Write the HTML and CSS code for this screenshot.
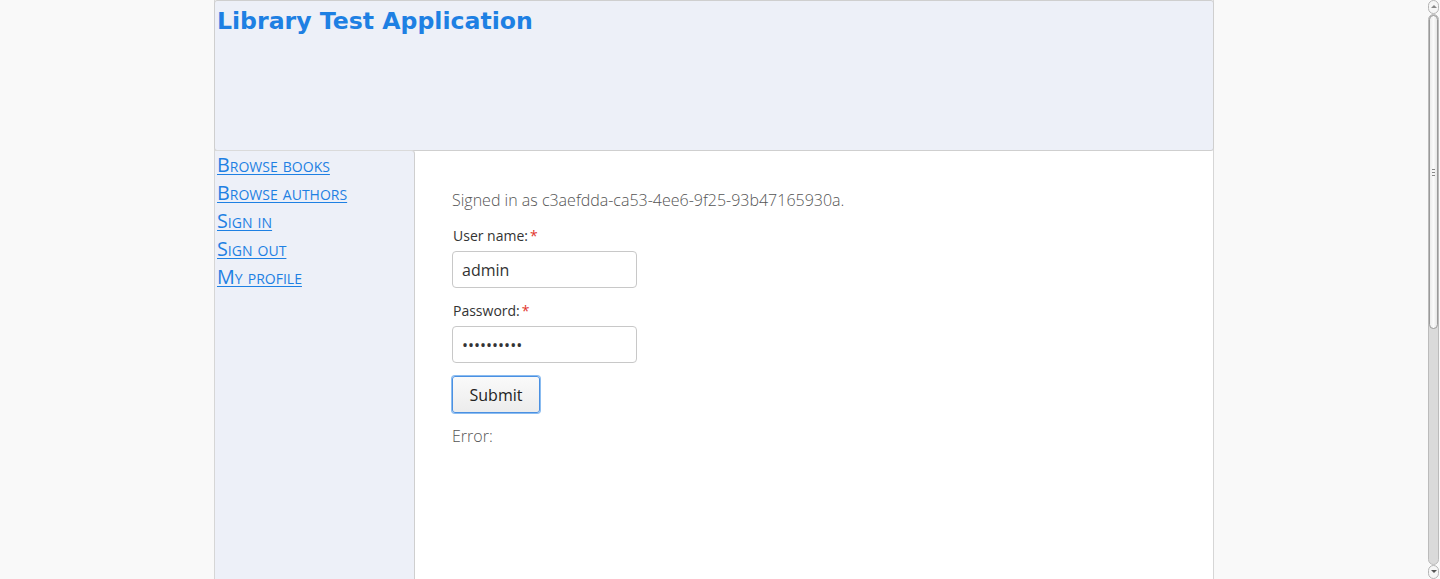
FILE: index.html
```html
<!DOCTYPE html>
<html>
<head>
<meta charset="utf-8">
<link rel="stylesheet" href="styles.css">
</head>
<body>
<div class="viewport">
  <div class="page">
    <header class="header">
      <h1 class="title">Library Test Application</h1>
    </header>
    <div class="body">
      <nav class="sidebar">
        <a href="#">Browse books</a>
        <a href="#">Browse authors</a>
        <a href="#">Sign in</a>
        <a href="#">Sign out</a>
        <a href="#">My profile</a>
      </nav>
      <main class="content">
        <p class="signed">Signed in as c3aefdda-ca53-4ee6-9f25-93b47165930a.</p>
        <div class="field">
          <label class="label">User name:<span class="req">*</span></label>
          <input class="input" type="text" value="admin">
        </div>
        <div class="field">
          <label class="label">Password:<span class="req">*</span></label>
          <input class="input" type="password" value="0123456789">
        </div>
        <button class="submit">Submit</button>
        <p class="error">Error:</p>
      </main>
    </div>
  </div>
</div>
<div class="scrollbar">
  <div class="sb-arrow sb-up"></div>
  <div class="sb-track">
    <div class="sb-thumb"><span class="grip"></span></div>
  </div>
  <div class="sb-arrow sb-down"></div>
</div>
</body>
</html>
```
FILE: styles.css
```css
html, body {
  margin: 0;
  padding: 0;
  height: 579px;
  overflow: hidden;
}
body {
  display: flex;
  background: #f9f9f9;
  font-family: "Open Sans", sans-serif;
}
.viewport {
  flex: 1;
  display: flex;
  justify-content: center;
}
.page {
  width: 1000px;
  display: flex;
  flex-direction: column;
  border-left: 1px solid #d6d6d6;
  border-right: 1px solid #d6d6d6;
  box-sizing: border-box;
}
.header {
  height: 151px;
  box-sizing: border-box;
  background: #edf0f8;
  border: 1px solid #cfcfcf;
  border-radius: 3px;
  margin: 0 -1px;
  padding: 5px 2px;
}
.title {
  margin: 0;
  font-family: "DejaVu Sans", sans-serif;
  font-weight: bold;
  font-size: 23.6px;
  line-height: 30px;
  color: #1e80e3;
}
.body {
  flex: 1;
  display: flex;
}
.sidebar {
  width: 200px;
  box-sizing: border-box;
  background: #edf0f8;
  border-right: 1px solid #cfcfcf;
  border-top: 1px solid #dadada;
  border-radius: 0 4px 0 0;
  display: flex;
  flex-direction: column;
  padding: 0 1px 0 2px;
  margin-top: -1px;
}
.sidebar a {
  font-family: "Open Sans", sans-serif;
  font-variant: small-caps;
  font-size: 19.8px;
  line-height: 28px;
  color: #1e80e3;
  text-decoration: underline;
  text-underline-offset: 2px;
  align-self: flex-start;
}
.content {
  flex: 1;
  background: #fff;
  padding: 36px 37px;
}
.signed {
  margin: 0 0 14px;
  font-size: 16px;
  font-weight: 300;
  color: #555;
  line-height: 26px;
}
.field {
  display: flex;
  flex-direction: column;
  align-items: flex-start;
  margin-bottom: 14px;
}
.label {
  font-size: 14px;
  color: #333;
  line-height: 18px;
  margin-bottom: 6px;
  padding-left: 1px;
}
.req {
  color: #e2362c;
  margin-left: 2px;
}
.input {
  width: 185px;
  height: 37px;
  box-sizing: border-box;
  border: 1px solid #c8c8c8;
  border-radius: 4px;
  padding: 0 9px;
  font-family: "Open Sans", sans-serif;
  font-size: 16px;
  color: #333;
  background: #fff;
}
.submit {
  display: block;
  width: 88px;
  height: 37px;
  box-sizing: border-box;
  border: 1px solid #4a90e2;
  box-shadow: 0 0 0 1px #8bbcf0;
  border-radius: 3px;
  background: linear-gradient(#fafafa, #ececec);
  font-family: "Open Sans", sans-serif;
  font-size: 16px;
  color: #222;
  margin-top: -1px;
}
.error {
  margin: 12px 0 0;
  font-size: 16px;
  font-weight: 300;
  color: #555;
}
.scrollbar {
  width: 12px;
  flex: none;
  display: flex;
  flex-direction: column;
  background: #f9f9f9;
  padding: 0 1px 0 0;
  box-sizing: border-box;
}
.sb-arrow {
  height: 12px;
  border: 1px solid #b5b5b5;
  border-radius: 6px;
  background: #f6f6f6;
  position: relative;
}
.sb-up::after, .sb-down::after {
  content: "";
  position: absolute;
  left: 2px;
  border-left: 3px solid transparent;
  border-right: 3px solid transparent;
}
.sb-up::after { top: 4px; border-bottom: 3px solid #888; }
.sb-down::after { top: 4px; border-top: 3px solid #555; }
.sb-track {
  flex: 1;
  display: flex;
  flex-direction: column;
  background: #dadada;
  border: 1px solid #bbb;
  border-radius: 6px;
}
.sb-thumb {
  height: 314px;
  box-sizing: border-box;
  border: 1px solid #9a9a9a;
  border-radius: 6px;
  background: linear-gradient(90deg, #ececec, #fbfbfb 50%, #e6e6e6);
  display: flex;
  align-items: center;
  justify-content: center;
}
.grip {
  width: 3px;
  height: 5px;
  border-top: 1px solid #888;
  border-bottom: 1px solid #888;
  position: relative;
}
.grip::after {
  content: "";
  position: absolute;
  left: 0;
  right: 0;
  top: 2px;
  border-top: 1px solid #888;
}
```
